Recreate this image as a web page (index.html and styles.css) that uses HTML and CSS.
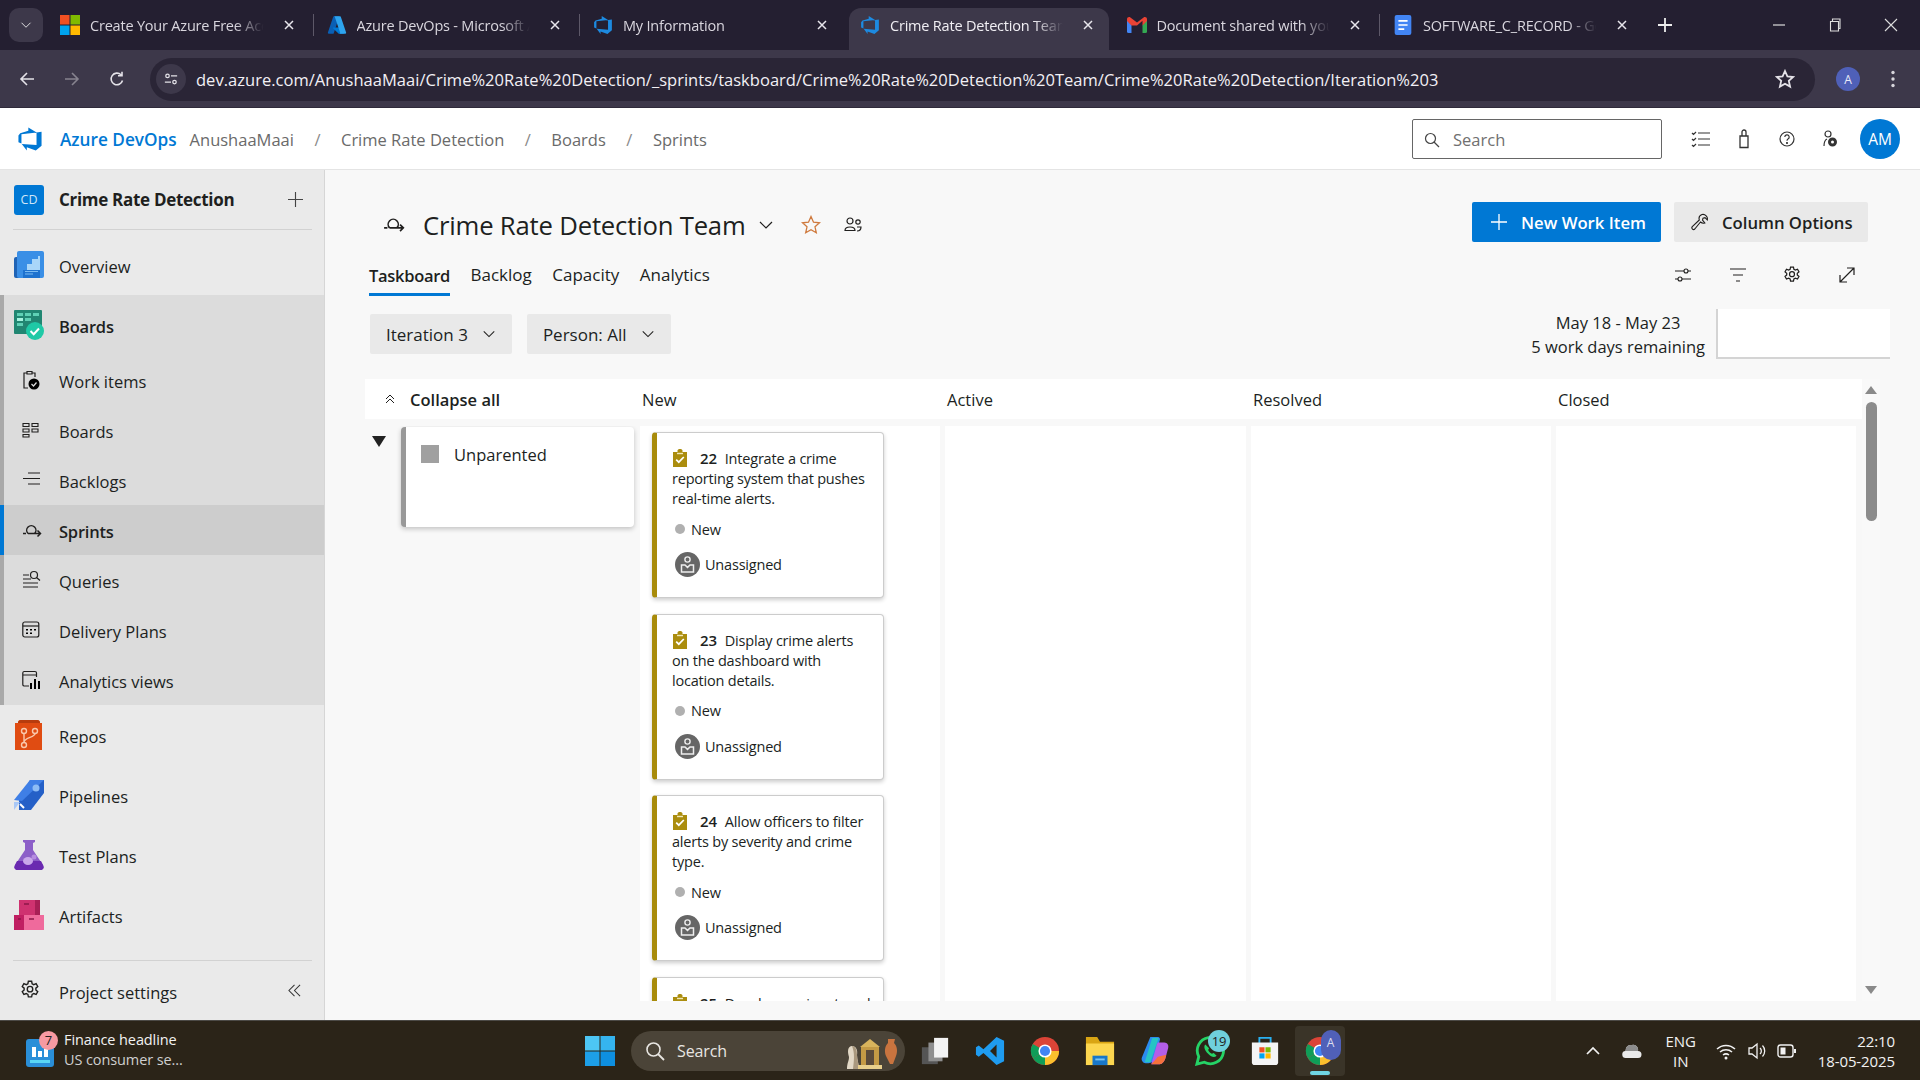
FILE: index.html
```html
<!DOCTYPE html>
<html lang="en">
<head>
<meta charset="utf-8">
<title>Crime Rate Detection Team</title>
<link rel="stylesheet" href="styles.css">
</head>
<body>
<svg class="defs" width="0" height="0" aria-hidden="true">
  <symbol id="ado" viewBox="0 0 18 18"><path d="M17 4v9.74l-4 3.28-6.2-2.26V17L3.29 12.41l10.23.8V4.44zm-3.41.49L7.85 1v2.29L2.23 4.94 1 6.52v4.7l2.08.88V5.65z"/></symbol>
  <symbol id="sprint" viewBox="0 0 20 16"><path d="M1 11.5h3M6 11.5a4.6 4.6 0 1 1 6.6 0M6 11.5h12.5M15.5 8.5l3 3-3 3" fill="none" stroke="currentColor" stroke-width="1.5"/></symbol>
  <symbol id="chev" viewBox="0 0 16 16"><path d="M2 5l6 6 6-6" fill="none" stroke="currentColor" stroke-width="1.2"/></symbol>
  <symbol id="gear" viewBox="0 0 16 16"><path d="M6.7 1h2.6l.4 2 1.3.7 1.9-.8 1.3 2.3-1.5 1.3v1.5l1.5 1.3-1.3 2.3-1.9-.8-1.3.7-.4 2H6.7l-.4-2-1.3-.7-1.9.8-1.3-2.3 1.5-1.3V6.5L1.8 5.2l1.3-2.3 1.9.8 1.3-.7z" fill="none" stroke="currentColor" stroke-width="1.1"/><circle cx="8" cy="7.3" r="2.2" fill="none" stroke="currentColor" stroke-width="1.1"/></symbol>
  <symbol id="wi" viewBox="0 0 14 18"><path d="M0 3h4.500V1.600C4.500.7 5.600 0 7 0s2.500.7 2.500 1.600V3H14v15H0z" fill="#ab8d0e"/><path d="M4 4.500h6" stroke="#f1e8b8" stroke-width="1.400"/><path d="M3.200 10.600l2.600 2.600 5-5.200" fill="none" stroke="#fff" stroke-width="1.700"/></symbol>
  <symbol id="unassigned" viewBox="0 0 25 25"><circle cx="12.500" cy="12.500" r="12.500" fill="#666"/><circle cx="12.500" cy="7.500" r="2.600" fill="none" stroke="#eee" stroke-width="1.400"/><path d="M6.500 13h3.500l2.500 2.400L15 13h3.500v7h-12z" fill="none" stroke="#eee" stroke-width="1.500"/></symbol>
  <symbol id="x" viewBox="0 0 12 12"><path d="M2 2l8 8M10 2l-8 8" fill="none" stroke="currentColor" stroke-width="1.500"/></symbol>
  <symbol id="chrome" viewBox="0 0 32 32"><circle cx="16" cy="16" r="15" fill="#db4437"/><path d="M16 16l-13 7.500A15 15 0 0 0 16 31l7.500-15z" fill="#0f9d58"/><path d="M16 16L3 8.500A15 15 0 0 0 3 23.500z" fill="#0f9d58"/><path d="M16 16h15a15 15 0 0 1-15 15z" fill="#fbc02d"/><circle cx="16" cy="16" r="7" fill="#fff"/><circle cx="16" cy="16" r="5.400" fill="#4285f4"/></symbol>
</svg>

<header class="tabstrip">
  <div class="tab-menu"><svg class="ic10"><use href="#chev"/></svg></div>
  <div class="tab">
    <svg class="fav" viewBox="0 0 20 20"><rect width="9.500" height="9.500" fill="#f25022"/><rect x="10.500" width="9.500" height="9.500" fill="#7fba00"/><rect y="10.500" width="9.500" height="9.500" fill="#00a4ef"/><rect x="10.500" y="10.500" width="9.500" height="9.500" fill="#ffb900"/></svg>
    <span class="tab-title">Create Your Azure Free Account</span><svg class="tab-x"><use href="#x"/></svg>
  </div>
  <div class="tab tab-sep">
    <svg class="fav" viewBox="0 0 96 96"><path d="M33.34 6.54h26.04L32.36 87.1a4.15 4.15 0 0 1-3.94 2.83H8.15a4.14 4.14 0 0 1-3.93-5.47L29.4 9.37a4.15 4.15 0 0 1 3.94-2.83z" fill="#0a5fb4"/><path d="M71.2 60.53H29.88a1.91 1.91 0 0 0-1.3 3.31l26.54 24.78a4.17 4.17 0 0 0 2.85 1.12h23.38z" fill="#0078d4"/><path d="M66.6 9.36a4.14 4.14 0 0 0-3.93-2.82H33.65a4.15 4.15 0 0 1 3.93 2.82l25.18 74.62a4.15 4.15 0 0 1-3.93 5.48h29.02a4.15 4.15 0 0 0 3.93-5.48z" fill="#2ea4ee"/></svg>
    <span class="tab-title">Azure DevOps - Microsoft Azure</span><svg class="tab-x"><use href="#x"/></svg>
  </div>
  <div class="tab tab-sep">
    <svg class="fav fav-ado"><use href="#ado"/></svg>
    <span class="tab-title">My Information</span><svg class="tab-x"><use href="#x"/></svg>
  </div>
  <div class="tab tab-active">
    <svg class="fav fav-ado"><use href="#ado"/></svg>
    <span class="tab-title">Crime Rate Detection Team Sprint</span><svg class="tab-x"><use href="#x"/></svg>
  </div>
  <div class="tab">
    <svg class="fav" viewBox="0 0 20 16"><path d="M0 3v11.500A1.500 1.500 0 0 0 1.500 16H4.500V8l-4.500-5z" fill="#4285f4"/><path d="M20 3v11.500a1.500 1.500 0 0 1-1.500 1.500h-3V8l4.500-5z" fill="#34a853"/><path d="M4.500 8.500L0 4V2.200C0 .4 2 -.6 3.400.500L10 5.500l6.600-5c1.400-1.100 3.400-.1 3.400 1.700V4l-4.500 4.500V3.800L10 8.500z" fill="#ea4335"/></svg>
    <span class="tab-title">Document shared with you: SOFT</span><svg class="tab-x"><use href="#x"/></svg>
  </div>
  <div class="tab tab-sep">
    <svg class="fav" viewBox="0 0 20 24"><rect width="20" height="24" rx="2.500" fill="#4285f4"/><path d="M4.500 7h11M4.500 12h11M4.500 17h7" stroke="#fff" stroke-width="2"/></svg>
    <span class="tab-title">SOFTWARE_C_RECORD - Google Docs</span><svg class="tab-x"><use href="#x"/></svg>
  </div>
  <div class="tab-new"><svg viewBox="0 0 14 14" class="ic14"><path d="M7 0v14M0 7h14" fill="none" stroke="currentColor" stroke-width="1.800"/></svg></div>
  <div class="winctl">
    <svg class="ic14" viewBox="0 0 14 14"><path d="M1 7h12" stroke="currentColor" stroke-width="1.200"/></svg>
    <svg class="ic14" viewBox="0 0 14 14"><path d="M2.500 3.500h8v9.500h-8zM4.500 3.500V1h7.500v9.500h-1.500" fill="none" stroke="currentColor" stroke-width="1.100"/></svg>
    <svg class="ic14" viewBox="0 0 14 14"><path d="M1 1l12 12M13 1L1 13" fill="none" stroke="currentColor" stroke-width="1.100"/></svg>
  </div>
</header>

<nav class="toolbar">
  <svg class="nav-ic" viewBox="0 0 16 16"><path d="M15 8H2M8 2L2 8l6 6" fill="none" stroke="currentColor" stroke-width="1.600"/></svg>
  <svg class="nav-ic nav-dim" viewBox="0 0 16 16"><path d="M1 8h13M8 2l6 6-6 6" fill="none" stroke="currentColor" stroke-width="1.600"/></svg>
  <svg class="nav-ic" viewBox="0 0 16 16"><path d="M13.500 9.500A5.800 5.800 0 1 1 12 3.800M13 .8v4H9" fill="none" stroke="currentColor" stroke-width="1.600"/></svg>
  <div class="omnibox">
    <span class="site-ic"><svg viewBox="0 0 16 16" class="ic14"><circle cx="4" cy="4.500" r="2" fill="none" stroke="currentColor" stroke-width="1.400"/><path d="M8 4.500h7M1 11.500h7" stroke="currentColor" stroke-width="1.400"/><circle cx="12" cy="11.500" r="2" fill="none" stroke="currentColor" stroke-width="1.400"/></svg></span>
    <span class="url">dev.azure.com/AnushaaMaai/Crime%20Rate%20Detection/_sprints/taskboard/Crime%20Rate%20Detection%20Team/Crime%20Rate%20Detection/Iteration%203</span>
    <svg class="star-w" viewBox="0 0 20 20"><path d="M10 2l2.400 5.400 5.800.6-4.400 3.900 1.300 5.700L10 14.700l-5.100 2.900 1.300-5.700L1.800 8l5.800-.6z" fill="none" stroke="currentColor" stroke-width="1.800"/></svg>
  </div>
  <span class="profile">A</span>
  <svg class="dots" viewBox="0 0 4 18"><circle cx="2" cy="2.500" r="1.700"/><circle cx="2" cy="9" r="1.700"/><circle cx="2" cy="15.500" r="1.700"/></svg>
</nav>

<div class="appbar">
  <svg class="app-logo"><use href="#ado"/></svg>
  <span class="brand">Azure DevOps</span>
  <span class="crumb crumb-first">AnushaaMaai</span><span class="slash">/</span>
  <span class="crumb">Crime Rate Detection</span><span class="slash">/</span>
  <span class="crumb">Boards</span><span class="slash">/</span>
  <span class="crumb">Sprints</span>
  <div class="app-search">
    <svg class="ic16" viewBox="0 0 16 16"><circle cx="6.500" cy="6.500" r="5" fill="none" stroke="currentColor" stroke-width="1.200"/><path d="M10 10l5 5" stroke="currentColor" stroke-width="1.200"/></svg>
    <span>Search</span>
  </div>
  <div class="app-icons">
    <span class="app-ic"><svg class="ic20" viewBox="0 0 20 20"><path d="M7 4h12M7 10h12M7 16h12M1 4l1.500 1.500L5 3M1 10l1.500 1.500L5 9M1 16l1.500 1.500L5 15" fill="none" stroke="currentColor" stroke-width="1.200"/></svg></span>
    <span class="app-ic"><svg class="ic20" viewBox="0 0 20 20"><path d="M6 7h8v11.500H6zM8 7V3a2 2 0 0 1 4 0v4" fill="none" stroke="currentColor" stroke-width="1.300"/></svg></span>
    <span class="app-ic"><svg class="ic20" viewBox="0 0 20 20"><circle cx="10" cy="10" r="7" fill="none" stroke="currentColor" stroke-width="1.200"/><path d="M7.800 8a2.200 2.200 0 1 1 3.200 2c-.8.500-1 .9-1 1.700" fill="none" stroke="currentColor" stroke-width="1.200"/><circle cx="10" cy="14" r=".9"/></svg></span>
    <span class="app-ic"><svg class="ic20" viewBox="0 0 20 20"><circle cx="8" cy="5" r="3" fill="none" stroke="currentColor" stroke-width="1.200"/><path d="M4 17c0-3 .8-6 3-7" fill="none" stroke="currentColor" stroke-width="1.200"/><circle cx="12.500" cy="13" r="3" fill="none" stroke="currentColor" stroke-width="3"/></svg></span>
  </div>
  <span class="avatar">AM</span>
</div>

<div class="main">
  <aside class="sidebar">
    <div class="project">
      <span class="project-badge">CD</span>
      <span class="project-name">Crime Rate Detection</span>
      <svg class="plus" viewBox="0 0 16 16"><path d="M8 0v16M0 8h16" fill="none" stroke="currentColor" stroke-width="1.200"/></svg>
    </div>
    <div class="side-top">
      <a class="hub"><svg class="hub-ic" viewBox="0 0 30 30"><rect y="7" width="8" height="21" rx="2" fill="#1f63b5"/><rect x="3" y="1" width="27" height="27" rx="2" fill="#3a8fe6"/><path d="M13 14h5V9h6V6h2v14H13z" fill="#a9d6f9"/><path d="M9 20h17v8H9z" fill="#1e72cf"/><path d="M11 21.500h13M11 24h8" stroke="#7cbcf2" stroke-width="1"/></svg><span>Overview</span></a>
    </div>
    <div class="group">
      <a class="hub hub-on"><svg class="hub-ic" viewBox="0 0 30 30"><rect width="28" height="24" rx="1" fill="#218672"/><path d="M3 3h6v3H3zM11 3h6v3h-6zM19 3h6v3h-6zM3 8h6v3H3zM11 8h6v3h-6zM3 13h6v3H3z" fill="#5fd0b5"/><path d="M3 8h6v3H3z" fill="#a5f2de"/><circle cx="21" cy="21" r="9" fill="#1fc9a6"/><path d="M16.500 21l3.200 3.200 5.300-5.700" fill="none" stroke="#fff" stroke-width="2"/></svg><span>Boards</span></a>
      <a class="sub"><svg class="sub-ic" viewBox="0 0 20 20"><path d="M6 18H2V3h3M10 3h3v4M5 1.500h5V4H5z" fill="none" stroke="currentColor" stroke-width="1.200"/><circle cx="12" cy="14" r="5.500"/><path d="M9.500 14l2 2 3-3.500" fill="none" stroke="#dcdcdc" stroke-width="1.200"/></svg><span>Work items</span></a>
      <a class="sub"><svg class="sub-ic" viewBox="0 0 20 20"><path d="M1 3.500h6v3H1zM10 3.500h6v3h-6zM1 9h6v3H1zM10 9h6v3h-6zM1 14.500h6v2.500H1z" fill="none" stroke="currentColor" stroke-width="1.100"/></svg><span>Boards</span></a>
      <a class="sub"><svg class="sub-ic" viewBox="0 0 20 20"><path d="M6 3h12M1 8.500h17M6 14h12" fill="none" stroke="currentColor" stroke-width="1.100"/></svg><span>Backlogs</span></a>
      <a class="sub sub-on"><svg class="sub-ic"><use href="#sprint"/></svg><span>Sprints</span></a>
      <a class="sub"><svg class="sub-ic" viewBox="0 0 20 20"><path d="M1 5h6M1 9h8M1 13h15M1 17h15" fill="none" stroke="currentColor" stroke-width="1.100"/><circle cx="12" cy="5" r="3.500" fill="none" stroke="currentColor" stroke-width="1.200"/><path d="M14.500 7.500l3.500 3" stroke="currentColor" stroke-width="1.200"/></svg><span>Queries</span></a>
      <a class="sub"><svg class="sub-ic" viewBox="0 0 20 20"><rect x=".8" y="2" width="16" height="15" rx="2" fill="none" stroke="currentColor" stroke-width="1.200"/><path d="M.8 6h16" stroke="currentColor" stroke-width="1.200"/><path d="M4 9h2v1.500H4zM8 9h2v1.500H8zM12 9h2v1.500h-2zM4 12.500h2V14H4zM8 12.500h2V14H8z"/></svg><span>Delivery Plans</span></a>
      <a class="sub"><svg class="sub-ic" viewBox="0 0 20 20"><path d="M7 16H2A1.500 1.500 0 0 1 .8 14.500V3A1.500 1.500 0 0 1 2 1.500h11A1.500 1.500 0 0 1 14.500 3v4M.8 5h14" fill="none" stroke="currentColor" stroke-width="1.200"/><path d="M8 13h2v6H8zM12 9h2v10h-2zM16 11h2v8h-2z"/></svg><span>Analytics views</span></a>
    </div>
    <div class="side-rest">
      <a class="hub"><svg class="hub-ic" viewBox="0 0 30 30"><path d="M4 3a3 3 0 0 1 3-3h16a3 3 0 0 1 3 3h2v27H1V3z" fill="#e04c12"/><path d="M4 3a3 3 0 0 1 3-3h16a3 3 0 0 1 3 3z" fill="#b73c0e"/><g fill="none" stroke="#f9c8ac" stroke-width="1.400"><circle cx="10" cy="11" r="2.500"/><circle cx="21" cy="11" r="2.500"/><circle cx="10" cy="25" r="2.500"/><path d="M10 13.500v9M21 13.500c0 4-11 4-11 9"/></g></svg><span>Repos</span></a>
      <a class="hub"><svg class="hub-ic" viewBox="0 0 30 30"><path d="M16 0h14v13L17 30H5V20z" fill="#2560c7"/><path d="M16 0h14L8 21l-8-1z" fill="#3f7fe6"/><circle cx="22" cy="8" r="3.500" fill="#8dbcf5"/><path d="M0 22h6l-6 8z" fill="#a9c8f7"/><path d="M6 24l4 4" stroke="#fff" stroke-width="2"/></svg><span>Pipelines</span></a>
      <a class="hub"><svg class="hub-ic" viewBox="0 0 30 30"><path d="M9 0h12v2l-2 1v7l10 15c1.500 3 0 5-3 5H4c-3 0-4.500-2-3-5l10-15V3L9 2z" fill="#8c5fc8"/><path d="M3 21h24l2 4c1.500 3 0 5-3 5H4c-3 0-4.500-2-3-5z" fill="#6a2ab0"/><ellipse cx="14" cy="21" rx="5" ry="4" fill="#c9a8ea"/><circle cx="20" cy="17" r="2.500" fill="#b58de0"/></svg><span>Test Plans</span></a>
      <a class="hub"><svg class="hub-ic" viewBox="0 0 30 30"><rect x="5" width="21" height="15" fill="#cf3270"/><rect x="21" width="5" height="15" fill="#a81f56"/><rect y="15" width="30" height="15" fill="#ef6a9c"/><rect y="15" width="10" height="15" fill="#c01f62"/><path d="M10 4h5M4 19h3M15 19h5" stroke="#8d1748" stroke-width="1.500"/></svg><span>Artifacts</span></a>
    </div>
    <div class="side-foot">
      <svg class="sub-ic"><use href="#gear"/></svg>
      <span>Project settings</span>
      <svg class="collapse" viewBox="0 0 14 14"><path d="M7 1L1 7l6 6M13 1L7 7l6 6" fill="none" stroke="currentColor" stroke-width="1.100"/></svg>
    </div>
  </aside>

  <main class="content">
    <div class="team-row">
      <svg class="team-sprint"><use href="#sprint"/></svg>
      <h1 class="team-title">Crime Rate Detection Team</h1>
      <svg class="team-chev"><use href="#chev"/></svg>
      <svg class="team-star" viewBox="0 0 20 20"><path d="M10 1.500l2.500 5.700 6 .6-4.500 4 1.300 6L10 14.700l-5.300 3.100 1.300-6-4.500-4 6-.6z" fill="none" stroke="currentColor" stroke-width="1.300"/></svg>
      <svg class="team-people" viewBox="0 0 18 16"><circle cx="6" cy="4" r="3" fill="none" stroke="currentColor" stroke-width="1.200"/><path d="M1 13.500c0-3 2-3.500 5-3.500s5 .5 5 3.500H1z" fill="none" stroke="currentColor" stroke-width="1.200"/><circle cx="14" cy="5" r="2.200" fill="none" stroke="currentColor" stroke-width="1.200"/><path d="M13 10h4c0 3-1.500 4-4 4" fill="none" stroke="currentColor" stroke-width="1.200"/></svg>
      <div class="team-actions">
        <button class="btn btn-primary"><svg class="ic16" viewBox="0 0 16 16"><path d="M8 0v16M0 8h16" fill="none" stroke="currentColor" stroke-width="1.300"/></svg>New Work Item</button>
        <button class="btn btn-plain"><svg class="ic18" viewBox="0 0 18 18"><path d="M11 1.500a4.500 4.500 0 0 1 5.300 5.500l-2.300-2.300-2 .5-.5 2L13.800 10a4.500 4.500 0 0 1-4.300-1L3.800 16a1.700 1.700 0 0 1-2.500-2.300L8.300 7a4.500 4.500 0 0 1 2.700-5.500z" fill="none" stroke="currentColor" stroke-width="1.100"/></svg>Column Options</button>
      </div>
    </div>

    <div class="tabs-row">
      <a class="ptab ptab-on">Taskboard</a>
      <a class="ptab">Backlog</a>
      <a class="ptab">Capacity</a>
      <a class="ptab">Analytics</a>
      <div class="view-icons">
        <span class="view-ic"><svg class="ic18" viewBox="0 0 18 18"><path d="M1 5h9M14 5h3M1 13h3M8 13h9" stroke="currentColor" stroke-width="1.100"/><circle cx="12" cy="5" r="2" fill="none" stroke="currentColor" stroke-width="1.100"/><circle cx="6" cy="13" r="2" fill="none" stroke="currentColor" stroke-width="1.100"/></svg></span>
        <span class="view-ic"><svg class="ic18" viewBox="0 0 18 18"><path d="M1 3h16M4 9h10M7 15h4" stroke="currentColor" stroke-width="1.200"/></svg></span>
        <span class="view-ic"><svg class="ic18"><use href="#gear"/></svg></span>
        <span class="view-ic"><svg class="ic18" viewBox="0 0 18 18"><path d="M2 16L16 2M9 2h7v7M2 9v7h7" fill="none" stroke="currentColor" stroke-width="1.200"/></svg></span>
      </div>
    </div>

    <div class="filter-row">
      <button class="pick">Iteration 3<svg class="ic14"><use href="#chev"/></svg></button>
      <button class="pick">Person: All<svg class="ic14"><use href="#chev"/></svg></button>
      <div class="dates"><div>May 18 - May 23</div><div>5 work days remaining</div></div>
      <div class="burndown"></div>
    </div>

    <section class="board">
      <div class="board-main">
        <div class="board-head">
          <div class="head-first"><svg class="ic12" viewBox="0 0 12 12"><path d="M2 6l4-4 4 4M2 10l4-4 4 4" fill="none" stroke="currentColor" stroke-width="1"/></svg><b>Collapse all</b></div>
          <div class="head-col">New</div>
          <div class="head-col">Active</div>
          <div class="head-col">Resolved</div>
          <div class="head-col">Closed</div>
        </div>
        <div class="board-body">
          <div class="lane">
            <span class="tri"></span>
            <div class="parent"><span class="sq"></span><span>Unparented</span></div>
          </div>
          <div class="col col-new">
            <article class="card">
              <p class="card-title"><svg class="wi-ic"><use href="#wi"/></svg><b>22</b><span>Integrate a crime reporting system that pushes real-time alerts.</span></p>
              <div class="card-state"><i class="dot"></i>New</div>
              <div class="card-who"><svg class="who-ic"><use href="#unassigned"/></svg>Unassigned</div>
            </article>
            <article class="card">
              <p class="card-title"><svg class="wi-ic"><use href="#wi"/></svg><b>23</b><span>Display crime alerts on the dashboard with location details.</span></p>
              <div class="card-state"><i class="dot"></i>New</div>
              <div class="card-who"><svg class="who-ic"><use href="#unassigned"/></svg>Unassigned</div>
            </article>
            <article class="card">
              <p class="card-title"><svg class="wi-ic"><use href="#wi"/></svg><b>24</b><span>Allow officers to filter alerts by severity and crime type.</span></p>
              <div class="card-state"><i class="dot"></i>New</div>
              <div class="card-who"><svg class="who-ic"><use href="#unassigned"/></svg>Unassigned</div>
            </article>
            <article class="card">
              <p class="card-title"><svg class="wi-ic"><use href="#wi"/></svg><b>25</b><span>Develop a crime trend view.</span></p>
            </article>
          </div>
          <div class="col"></div>
          <div class="col"></div>
          <div class="col"></div>
        </div>
      </div>
      <div class="scrollbar">
        <span class="arrow-up"></span>
        <span class="thumb"></span>
        <span class="arrow-down"></span>
      </div>
    </section>
  </main>
</div>

<footer class="taskbar">
  <div class="tb-left">
    <div class="widget-ic">
      <svg class="widget-svg" viewBox="0 0 28 32"><rect y="4" width="28" height="28" rx="3" fill="#2a8fd8"/><path d="M6 12h4v10H6zM12 16h4v6h-4zM18 13h4v9h-4z" fill="#fff"/><path d="M4 25h20v3H4z" fill="#59d6f5"/></svg>
      <span class="widget-badge">7</span>
    </div>
    <div class="widget-text"><div>Finance headline</div><div class="widget-sub">US consumer se...</div></div>
  </div>
  <svg class="win" viewBox="0 0 30 30"><rect width="14.500" height="14.500" fill="#4dc6f4"/><rect x="15.500" width="14.500" height="14.500" fill="#35b4ef"/><rect y="15.500" width="14.500" height="14.500" fill="#1d9fe8"/><rect x="15.500" y="15.500" width="14.500" height="14.500" fill="#0e8fe0"/></svg>
  <div class="tb-search">
    <svg class="ic20" viewBox="0 0 20 20"><circle cx="8.500" cy="8.500" r="6.500" fill="none" stroke="currentColor" stroke-width="1.600"/><path d="M13 13l6 6" stroke="currentColor" stroke-width="1.800"/></svg>
    <span>Search</span>
    <svg class="tb-art" viewBox="0 0 56 36"><path d="M3 36c0-6 2-8 2-12-2-6-1-11 3-11s6 4 5 9c0 5 2 9 2 14z" fill="#e2d8c6"/><path d="M8 13c3 0 5 3 5 9 0 5 2 9 2 14H9c1-8 2-16-1-23z" fill="#a9987e"/><path d="M16 14L26 6l10 8z" fill="#d9b45c"/><path d="M17 14h18v18H17z" fill="#c49a45"/><path d="M22 17h8v15h-8z" fill="#5a4a3a"/><path d="M14 32h24v4H14z" fill="#e8cf8c"/><path d="M44 6h7l-1 4c3 3 4 8 2 13l-3 8h-3l-4-8c-2-5-1-10 2-13z" fill="#c9743f"/></svg>
  </div>
  <div class="tb-apps">
    <span class="app"><svg class="tb-ic" viewBox="0 0 32 32"><path d="M2 12h17v18H2z" fill="#555"/><path d="M9 7h15v20H9z" fill="#8f8f8f"/><path d="M15 2h15v21H15z" fill="#f3f3f3"/></svg></span>
    <span class="app"><svg class="tb-ic" viewBox="0 0 32 32"><path d="M23 1l8 4v22l-8 4L9 18l-5 4-3-2V12l3-2 5 4zM23 9l-7 7 7 7z" fill="#1f9cf0" fill-rule="evenodd"/></svg></span>
    <span class="app"><svg class="tb-ic"><use href="#chrome"/></svg></span>
    <span class="app"><svg class="tb-ic" viewBox="0 0 32 32"><path d="M1 1h12l3 5h15v25H1z" fill="#d9a514"/><path d="M1 8h30v23H1z" fill="#fcd64f"/><rect x="8" y="21" width="16" height="10" fill="#1877c9"/><rect x="11" y="24" width="10" height="2" fill="#7cc4f2"/></svg></span>
    <span class="app"><svg class="tb-ic" viewBox="0 0 32 32"><path d="M11 1h8c2 0 3 2 2 4L16 24c-1 3-4 5-7 5H6c-3 0-5-3-4-6z" fill="#2b8cf0"/><path d="M13 2h7L11 28H5z" fill="#27c4c4"/><path d="M19 7h7c3 0 5 3 4 6l-3 11c-1 3-3 6-6 6h-9l6-21z" fill="#b45ee8"/><path d="M12 30h9c3 0 5-3 6-6l1-4-9 2-4 5z" fill="#f5713c"/></svg></span>
    <span class="app"><svg class="tb-ic" viewBox="0 0 32 32"><path d="M2 30l2-8A14 14 0 1 1 10 28z" fill="none" stroke="#25d366" stroke-width="3"/><path d="M11 9c-2 2-1 6 3 10s7 4 9 2l-3-3-2 1c-2-1-3-2-4-4l1-2z" fill="#25d366"/></svg><span class="wa-badge">19</span></span>
    <span class="app"><svg class="tb-ic" viewBox="0 0 32 32"><path d="M10 8V2h12v6" fill="none" stroke="#2ab0f0" stroke-width="2"/><path d="M2 7h28v21a3 3 0 0 1-3 3H5a3 3 0 0 1-3-3z" fill="#f4f4f4"/><rect x="10" y="12" width="5.500" height="5.500" fill="#f25022"/><rect x="16.500" y="12" width="5.500" height="5.500" fill="#7fba00"/><rect x="10" y="18.500" width="5.500" height="5.500" fill="#00a4ef"/><rect x="16.500" y="18.500" width="5.500" height="5.500" fill="#ffb900"/></svg></span>
    <span class="app app-on"><svg class="tb-ic"><use href="#chrome"/></svg><span class="chrome-badge">A</span><i class="app-line"></i></span>
  </div>
  <div class="tray">
    <span class="tray-ic tray-caret"><svg class="ic14" viewBox="0 0 14 14"><path d="M1 10l6-6 6 6" fill="none" stroke="currentColor" stroke-width="1.700"/></svg></span>
    <span class="tray-ic tray-cloud"><svg class="ic20" viewBox="0 0 20 16"><path d="M4 15a3.500 3.500 0 0 1-.5-7A5.500 5.500 0 0 1 10 2a5 5 0 0 1 6 6 3.500 3.500 0 0 1 0 7z" fill="#e9e9e9"/><path d="M3.500 8A5.500 5.500 0 0 1 10 2a5 5 0 0 1 6 6z" fill="#8c8c8c"/></svg></span>
    <span class="tray-lang"><span>ENG</span><span>IN</span></span>
    <span class="tray-ic tray-wifi"><svg class="ic20" viewBox="0 0 20 20"><path d="M1 8a13 13 0 0 1 18 0M4 11a9 9 0 0 1 12 0M7 14a5 5 0 0 1 6 0" fill="none" stroke="currentColor" stroke-width="1.500"/><circle cx="10" cy="17" r="1.500" fill="currentColor"/></svg></span>
    <span class="tray-ic tray-vol"><svg class="ic20" viewBox="0 0 20 20"><path d="M2 7h3l5-4v14l-5-4H2z" fill="none" stroke="currentColor" stroke-width="1.300"/><path d="M13 7a4 4 0 0 1 0 6M15.500 4.500a8 8 0 0 1 0 11" fill="none" stroke="currentColor" stroke-width="1.300"/></svg></span>
    <span class="tray-ic tray-batt"><svg class="ic20" viewBox="0 0 20 20"><rect x="1" y="4" width="15" height="12" rx="2.500" fill="none" stroke="currentColor" stroke-width="1.400"/><rect x="3.500" y="6.500" width="5" height="7" fill="currentColor"/><rect x="17" y="8" width="2" height="4" fill="currentColor"/></svg></span>
    <div class="clock"><div>22:10</div><div>18-05-2025</div></div>
  </div>
</footer>
</body>
</html>
```

FILE: styles.css
```css
* { box-sizing: border-box; }
html, body { height: 100%; }
body {
  margin: 0;
  width: 1920px;
  height: 1080px;
  overflow: hidden;
  display: flex;
  flex-direction: column;
  font-family: "Open Sans", "Noto Sans", "Liberation Sans", sans-serif;
  font-size: 16.5px;
  color: #201f1e;
  background: #f8f8f8;
}
svg { display: block; flex: none; }
.defs { position: absolute; }
p, h1 { margin: 0; }
a { color: inherit; text-decoration: none; }
button { font: inherit; letter-spacing: inherit; border: 0; color: inherit; }
.ic10 { width: 12px; height: 12px; }
.ic12 { width: 12px; height: 12px; }
.ic14 { width: 14px; height: 14px; }
.ic16 { width: 16px; height: 16px; }
.ic18 { width: 18px; height: 18px; }
.ic20 { width: 20px; height: 20px; }

/* Browser tab strip */
.tabstrip {
  height: 50px;
  flex: none;
  display: flex;
  align-items: flex-end;
  background: #241f31;
  color: #d9d6de;
  font-size: 14.5px;
  letter-spacing: -0.2px;
  padding-left: 9px;
}
.tab-menu {
  width: 34px;
  height: 34px;
  margin: 0 3px 8px 0;
  border-radius: 10px;
  background: #3d384a;
  color: #eee;
  display: flex;
  align-items: center;
  justify-content: center;
}
.tab {
  position: relative;
  width: 266.5px;
  height: 42px;
  display: flex;
  align-items: center;
  padding: 0 18px 8px 14px;
}
.tab-sep::before {
  content: "";
  position: absolute;
  left: 0;
  top: 6px;
  height: 22px;
  width: 1px;
  background: #5d5868;
}
.tab-active {
  width: 260px;
  margin: 0 3.500px;
  padding-left: 11px;
  padding-right: 15px;
  background: #3d384a;
  border-radius: 12px 12px 0 0;
  color: #f1eff4;
}
.fav { width: 20px; height: 20px; }
.fav-ado { fill: #1d8ae0; }
.tab-title {
  flex: 1;
  margin-left: 10px;
  white-space: nowrap;
  overflow: hidden;
  -webkit-mask-image: linear-gradient(90deg, #000 80%, transparent 96%);
  mask-image: linear-gradient(90deg, #000 80%, transparent 96%);
}
.tab-x { width: 12px; height: 12px; margin-left: 12px; color: #e8e6ec; }
.tab-new {
  width: 46px;
  height: 42px;
  display: flex;
  align-items: center;
  padding: 0 0 8px 12px;
  color: #eee;
}
.winctl {
  margin-left: auto;
  height: 42px;
  display: flex;
  align-items: center;
  gap: 42px;
  padding: 0 22px 8px 0;
  color: #ddd;
}

/* Browser toolbar */
.toolbar {
  height: 58px;
  flex: none;
  display: flex;
  align-items: center;
  background: #3d384a;
  border-bottom: 1px solid #2f2a3a;
  color: #e4e2e8;
  padding: 1px 0 0 19px;
}
.nav-ic { width: 16px; height: 16px; margin-right: 29px; }
.nav-dim { color: #87838f; }
.omnibox {
  width: 1665px;
  height: 43px;
  margin-left: -4px;
  border-radius: 22px;
  background: #2a2536;
  display: flex;
  align-items: center;
  padding-left: 6px;
}
.site-ic {
  width: 30px;
  height: 30px;
  border-radius: 50%;
  background: #3d384a;
  display: flex;
  align-items: center;
  justify-content: center;
}
.url {
  margin-left: 10px;
  font-size: 16.5px;
  letter-spacing: 0.025px;
  color: #f2f0f5;
  white-space: nowrap;
}
.star-w { width: 20px; height: 20px; margin-left: auto; margin-right: 20px; }
.profile {
  width: 24px;
  height: 24px;
  margin-left: 21px;
  border-radius: 50%;
  background: #4f60b8;
  color: #e8eaf8;
  font-size: 12px;
  display: flex;
  align-items: center;
  justify-content: center;
}
.dots { width: 4px; height: 18px; margin-left: 31px; fill: #d8d6dc; }

/* Azure DevOps header */
.appbar {
  height: 62px;
  flex: none;
  display: flex;
  align-items: center;
  background: #fff;
  border-bottom: 1px solid #e4e4e4;
  padding: 2px 0 0 17px;
}
.app-logo { width: 26px; height: 26px; fill: #0078d4; margin-top: -2px; }
.brand { margin-left: 17px; color: #0078d4; font-weight: 600; font-size: 17.2px; }
.crumb { color: #6a6a6a; }
.crumb-first { margin-left: 13px; }
.slash { color: #8a8a8a; margin: 0 20.500px; }
.app-search {
  margin-left: auto;
  width: 250px;
  height: 40px;
  margin-top: -2px;
  border: 1px solid #666;
  border-radius: 2px;
  display: flex;
  align-items: center;
  padding: 2px 0 0 11px;
  gap: 13px;
  color: #444;
}
.app-search span { color: #707070; }
.app-icons { display: flex; margin-left: 17px; margin-top: -2px; }
.app-ic {
  width: 43px;
  height: 30px;
  display: flex;
  align-items: center;
  justify-content: center;
  color: #333;
}
.avatar {
  width: 40px;
  height: 40px;
  margin: -2px 20px 0 9px;
  border-radius: 50%;
  background: #0078d4;
  color: #fff;
  font-size: 15.5px;
  display: flex;
  align-items: center;
  justify-content: center;
}

/* Main area */
.main { flex: 1; display: flex; min-height: 0; }
.sidebar {
  width: 325px;
  flex: none;
  display: flex;
  flex-direction: column;
  background: #eaeaea;
  border-right: 1px solid #d6d6d6;
  overflow: hidden;
}
.project {
  height: 60px;
  flex: none;
  margin: 0 12px 0 13px;
  border-bottom: 1px solid #d2d2d2;
  display: flex;
  align-items: center;
  padding-left: 1px;
}
.project-badge {
  width: 30px;
  height: 30px;
  border-radius: 3px;
  background: #0078d4;
  color: #cfe6f8;
  font-size: 12.5px;
  display: flex;
  align-items: center;
  justify-content: center;
}
.project-name { margin-left: 15px; font-weight: 700; font-size: 17px; letter-spacing: -0.3px; }
.plus { width: 15px; height: 15px; margin-left: auto; margin-right: 9px; color: #444; }
.side-top { padding-top: 5px; }
.hub {
  height: 60px;
  display: flex;
  align-items: center;
  gap: 15px;
  padding-left: 14px;
}
.hub-ic { width: 30px; height: 30px; }
.hub > span { padding-top: 3px; }
.group { border-left: 4px solid #a9a9a9; background: #dcdcdc; }
.group .hub { padding-left: 10px; }
.hub-on { font-weight: 600; letter-spacing: -0.2px; }
.sub {
  height: 50px;
  display: flex;
  align-items: center;
  gap: 15px;
  padding-left: 18px;
}
.sub > span { padding-top: 3px; }
.sub-ic { width: 22px; height: 20px; padding-right: 2px; }
.sub-on {
  margin-left: -4px;
  padding-left: 18px;
  border-left: 4px solid #0078d4;
  background: #cdcdcd;
  font-weight: 600;
  letter-spacing: -0.2px;
}
.side-foot {
  margin: 15px 12px 0 13px;
  border-top: 1px solid #d2d2d2;
  padding: 15px 0 0 7px;
  display: flex;
  align-items: center;
  gap: 17px;
}
.side-foot > span { padding-top: 5px; }
.collapse { width: 13px; height: 13px; margin-left: auto; margin-right: 11px; color: #333; }

/* Content */
.content { flex: 1; min-width: 0; display: flex; flex-direction: column; }
.team-row {
  height: 40px;
  margin-top: 32px;
  padding: 0 52px 0 58px;
  display: flex;
  align-items: center;
  flex: none;
}
.team-sprint { width: 22px; height: 18px; margin-top: 3px; }
.team-title { margin-left: 18px; font-size: 25.7px; font-weight: 500; letter-spacing: -0.2px; margin-top: 7px; white-space: nowrap; }
.team-chev { width: 16px; height: 16px; margin: 6px 0 0 12px; }
.team-star { width: 20px; height: 20px; margin: 5px 0 0 27px; color: #cf7a3e; }
.team-people { width: 18px; height: 16px; margin: 6px 0 0 23px; }
.team-actions { margin-left: auto; display: flex; gap: 13px; }
.btn {
  height: 40px;
  border-radius: 2px;
  display: flex;
  align-items: center;
  font-weight: 600;
  white-space: nowrap;
  font-size: 16.7px;
}
.btn-primary { width: 189px; background: #0078d4; color: #fff; padding-left: 19px; gap: 14px; }
.btn-plain { width: 194px; background: #e9e9e9; padding-left: 17px; gap: 13px; }
.tabs-row {
  height: 36px;
  margin-top: 18px;
  flex: none;
  padding: 0 46px 0 44px;
  display: flex;
  gap: 20.500px;
  font-size: 17px;
}
.ptab {
  height: 36px;
  padding-top: 3px;
  white-space: nowrap;
}
.ptab-on { border-bottom: 3px solid #0078d4; font-weight: 600; font-size: 16.5px; letter-spacing: -0.3px; padding-top: 4px; }
.view-icons { margin-left: auto; display: flex; align-items: flex-start; }
.view-ic {
  width: 54.5px;
  height: 30px;
  display: flex;
  align-items: center;
  justify-content: center;
}
.filter-row {
  height: 50px;
  margin-top: 13px;
  flex: none;
  padding: 0 30px 0 45px;
  display: flex;
  align-items: center;
  gap: 15px;
}
.pick {
  height: 40px;
  border-radius: 2px;
  background: #e9e9e9;
  padding: 0 16px;
  display: flex;
  align-items: center;
  gap: 14px;
  font-size: 17px;
  font-weight: 500;
  white-space: nowrap;
}
.dates { margin-left: auto; text-align: center; line-height: 24px; padding-top: 1px; }
.burndown {
  width: 174px;
  height: 50px;
  margin-left: -4px;
  background: #fff;
  border-left: 2px solid #d4d4d4;
  border-bottom: 2px solid #d4d4d4;
}
.board {
  margin: 20px 40px 0;
  height: 622px;
  display: flex;
  flex: none;
}
.board-main { flex: 1; min-width: 0; display: flex; flex-direction: column; }
.board-head {
  height: 40px;
  flex: none;
  background: #fff;
  display: grid;
  grid-template-columns: 275px 305px 306px 305px 1fr;
  align-items: center;
}
.head-first { display: flex; align-items: center; gap: 14px; padding-left: 19px; }
.head-first b { font-weight: 600; }
.head-col { padding-left: 2px; }
.board-body {
  margin-top: 7px;
  flex: 1;
  min-height: 0;
  display: grid;
  grid-template-columns: 270px 300px 301px 300px 300px;
  column-gap: 5px;
  overflow: hidden;
}
.lane {
  display: flex;
  align-items: flex-start;
  padding: 1px 0 0 7px;
}
.tri {
  width: 14px;
  height: 11px;
  margin: 9px 15px 0 0;
  background: #222;
  clip-path: polygon(0 0, 100% 0, 50% 100%);
  flex: none;
}
.parent {
  width: 233px;
  height: 100px;
  flex: none;
  display: flex;
  align-items: flex-start;
  gap: 15px;
  background: #fff;
  border-left: 5px solid #999;
  border-radius: 4px;
  box-shadow: 0 2px 5px rgba(0,0,0,.22);
  padding: 16px 0 0 15px;
}
.sq { width: 18px; height: 18px; margin-top: 2px; background: #a0a0a0; flex: none; }
.col { background: #fff; }
.col-new { padding: 6px 0 0 12px; display: flex; flex-direction: column; gap: 15.500px; overflow: hidden; }
.card {
  width: 232px;
  flex: none;
  background: #fff;
  border: 1px solid #ccc;
  border-left: 5px solid #a88b0a;
  border-radius: 4px;
  box-shadow: 0 2px 4px rgba(0,0,0,.2);
  padding: 15px 11px 20px 15px;
  font-size: 14.5px;
  letter-spacing: -0.2px;
  height: 166px;
}
.card-title { line-height: 20px; }
.card-title b { font-weight: 600; margin-right: 8px; font-size: 15px; }
.wi-ic { display: inline-block; width: 14px; height: 18px; margin: 0 13px 0 1px; vertical-align: -3px; }
.card-state {
  height: 20px;
  margin-top: 10px;
  display: flex;
  align-items: center;
  padding-left: 3px;
}
.dot { width: 10px; height: 10px; margin-right: 6px; border-radius: 50%; background: #b0b0b0; }
.card-who {
  height: 25px;
  margin-top: 13px;
  display: flex;
  align-items: center;
  gap: 5px;
  padding-left: 3px;
}
.who-ic { width: 25px; height: 25px; }
.scrollbar {
  width: 18px;
  flex: none;
  background: #f9f9f9;
  display: flex;
  flex-direction: column;
  align-items: center;
}
.arrow-up, .arrow-down { width: 12px; height: 8px; background: #8a8a8a; }
.arrow-up { margin-top: 7px; clip-path: polygon(50% 0, 100% 100%, 0 100%); }
.arrow-down { margin-top: auto; margin-bottom: 7px; clip-path: polygon(0 0, 100% 0, 50% 100%); }
.thumb { width: 11px; height: 119px; margin-top: 8px; border-radius: 6px; background: #8c8c8c; }

/* Taskbar */
.taskbar {
  height: 60px;
  flex: none;
  display: flex;
  align-items: center;
  background: #2b2418;
  border-top: 1px solid #4c4a46;
  color: #f2f2f2;
  font-size: 14.5px;
  letter-spacing: -0.1px;
}
.tb-left { width: 585px; flex: none; display: flex; align-items: center; padding-left: 26px; gap: 10px; }
.widget-ic { position: relative; width: 28px; height: 32px; }
.widget-svg { width: 28px; height: 32px; }
.widget-badge {
  position: absolute;
  top: -4px;
  left: 13px;
  width: 19px;
  height: 19px;
  border-radius: 50%;
  background: #f79aa2;
  color: #222;
  font-size: 13px;
  text-align: center;
  line-height: 19px;
}
.widget-text { line-height: 20px; margin-top: -2px; }
.widget-sub { color: #cfcfcf; }
.win { width: 30px; height: 30px; }
.tb-search {
  width: 274px;
  height: 40px;
  margin-left: 16px;
  border-radius: 20px;
  background: #4b4438;
  display: flex;
  align-items: center;
  padding: 0 5px 0 14px;
  gap: 12px;
  color: #e8e6e2;
}
.tb-search span { font-size: 16px; }
.tb-art { width: 56px; height: 36px; margin-left: auto; }
.tb-apps { display: flex; margin-left: 2px; }
.app {
  position: relative;
  width: 55px;
  height: 50px;
  display: flex;
  align-items: center;
  justify-content: center;
}
.tb-ic { width: 30px; height: 30px; }
.wa-badge {
  position: absolute;
  top: 4px;
  left: 26px;
  width: 22px;
  height: 22px;
  border-radius: 50%;
  background: #6fd0dc;
  color: #222;
  font-size: 13px;
  text-align: center;
  line-height: 22px;
}
.app-on { background: #3a3428; border-radius: 4px; width: 50px; margin: 0 2.5px; }
.chrome-badge {
  position: absolute;
  top: 4px;
  left: 26px;
  width: 20px;
  height: 30px;
  border-radius: 10px;
  background: #5060b8;
  color: #dde;
  font-size: 12px;
  text-align: center;
  line-height: 26px;
}
.app-line {
  position: absolute;
  left: 15px;
  bottom: 1px;
  width: 20px;
  height: 4px;
  border-radius: 2px;
  background: #6fd6e4;
}
.tray { margin-left: auto; display: flex; align-items: center; padding-right: 25px; }
.tray-ic { display: flex; align-items: center; justify-content: center; height: 30px; }
.tray-caret { width: 39px; }
.tray-cloud { width: 39px; }
.tray-lang {
  width: 59px;
  display: flex;
  flex-direction: column;
  align-items: center;
  line-height: 20px;
  font-size: 15px;
}
.tray-wifi { width: 31.5px; }
.tray-vol { width: 30px; }
.tray-batt { width: 30px; }
.clock { margin-left: 16px; text-align: right; line-height: 20px; font-size: 15px; }
```
